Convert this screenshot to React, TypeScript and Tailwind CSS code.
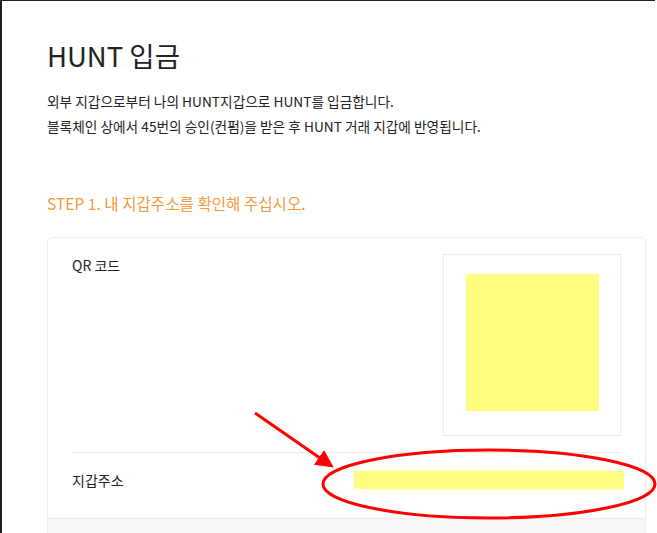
import React from 'react';

const font = { fontFamily: '"Noto Sans CJK KR", "Noto Sans", sans-serif' };

const Annotation = () => (
  <svg
    className="pointer-events-none absolute left-0 top-0"
    width="657"
    height="533"
    viewBox="0 0 657 533"
  >
    <defs>
      <marker
        id="head"
        markerWidth="6"
        markerHeight="6"
        refX="4.5"
        refY="3"
        orient="auto"
        markerUnits="strokeWidth"
      >
        <path d="M0,0 L6,3 L0,6 Z" fill="#ff0000" />
      </marker>
    </defs>
    <line
      x1="255"
      y1="413"
      x2="330"
      y2="465"
      stroke="#ff0000"
      strokeWidth="3"
      markerEnd="url(#head)"
    />
    <ellipse
      cx="489"
      cy="484"
      rx="166"
      ry="34"
      fill="none"
      stroke="#ff0000"
      strokeWidth="3"
    />
  </svg>
);

const App = () => {
  return (
    <div className="relative h-[533px] w-[657px] overflow-hidden bg-white" style={font}>
      <div className="h-full w-[655px] border-l-2 border-t border-[#1f2023] pl-[45px] pr-[9px] text-[#222]">
        <h1 className="pt-[33px] text-[27.5px] leading-[42px] font-normal">HUNT 입금</h1>
        <div className="mt-[13px] text-[13.7px] leading-[25px]">
          <p>외부 지갑으로부터 나의 HUNT지갑으로 HUNT를 입금합니다.</p>
          <p>블록체인 상에서 45번의 승인(컨펌)을 받은 후 HUNT 거래 지갑에 반영됩니다.</p>
        </div>
        <h2 className="mt-[52px] text-[15.6px] leading-[24px] text-[#f39a3a]">
          STEP 1. 내 지갑주소를 확인해 주십시오.
        </h2>
        <div className="mt-[22px] rounded-[5px] border border-[#ececec] bg-white">
          <div className="px-[24px] pt-[16px]">
            <div className="flex justify-between border-b border-[#ececec] pb-[16px]">
              <span className="mt-[1px] text-[14px] leading-[20px]">QR 코드</span>
              <div className="flex h-[182px] w-[178px] justify-center border border-[#ececec] pt-[19px]">
                <div className="h-[137px] w-[133px] bg-[#fffd80]" />
              </div>
            </div>
            <div className="flex h-[54px] items-center justify-between">
              <span className="text-[14px] leading-[20px]">지갑주소</span>
              <div className="-mr-[3px] h-[18px] w-[270px] bg-[#fffd80]" />
            </div>
            <div className="h-[11px]" />
          </div>
          <div className="h-[40px] border-t border-[#ececec] bg-[#f7f7f7]" />
        </div>
      </div>
      <Annotation />
    </div>
  );
};

export default App;
